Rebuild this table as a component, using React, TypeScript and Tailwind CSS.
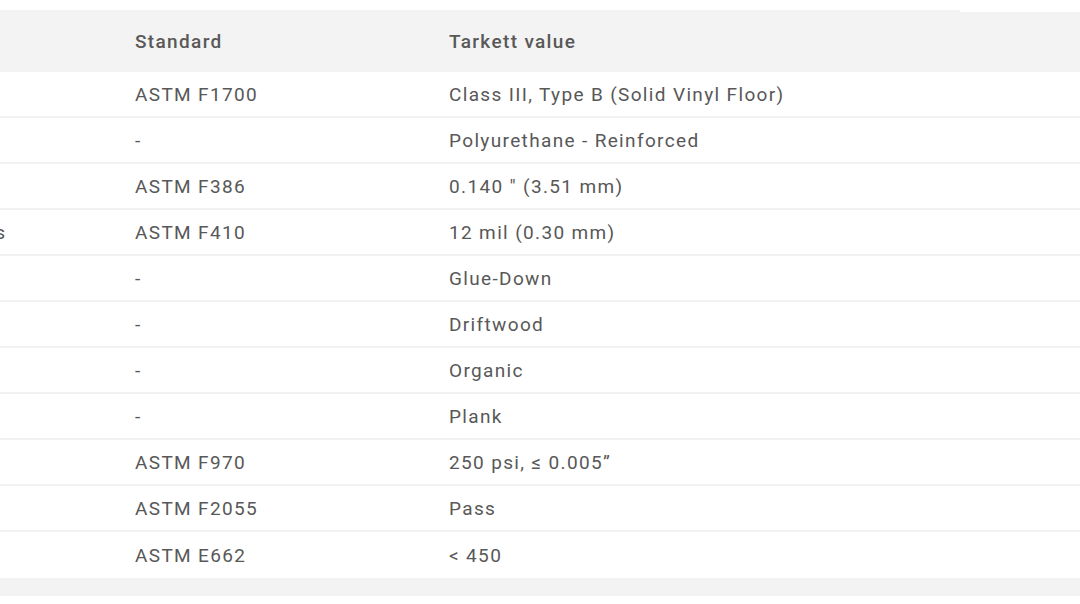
const rows: [string, string, string][] = [
  ["Classification", "ASTM F1700", "Class III, Type B (Solid Vinyl Floor)"],
  ["Finish", "-", "Polyurethane - Reinforced"],
  ["Overall Thickness", "ASTM F386", "0.140 \" (3.51 mm)"],
  ["Wear Layer Thickness", "ASTM F410", "12 mil (0.30 mm)"],
  ["Installation", "-", "Glue-Down"],
  ["Color", "-", "Driftwood"],
  ["Design", "-", "Organic"],
  ["Format", "-", "Plank"],
  ["Static Load Limit", "ASTM F970", "250 psi, ≤ 0.005”"],
  ["Squareness", "ASTM F2055", "Pass"],
  ["Smoke Density", "ASTM E662", "< 450"],
];

export default function App() {
  return (
    <main
      className="w-[1080px] h-[604px] overflow-hidden bg-white pt-[10px] text-[19px] tracking-[1.35px] text-[#585858]"
      style={{ fontFamily: "Roboto, 'Liberation Sans', sans-serif" }}
    >
      <div className="ml-[-205px]">
        <div className="relative grid grid-cols-[340px_314px_1fr] h-[62px] pt-[2px] items-center bg-[#f3f3f3] font-medium">
          <div>Test</div>
          <div>Standard</div>
          <div>Tarkett value</div>
          <div className="absolute top-0 right-0 w-[120px] h-[2px] bg-white" />
        </div>

        {rows.map(([label, standard, value], i) => (
          <div
            key={i}
            className={
              "grid grid-cols-[340px_314px_1fr] h-[46px] pt-[3px] items-center" +
              (i < rows.length - 1 ? " border-b-2 border-[#f2f2f2]" : "")
            }
          >
            <div className="whitespace-nowrap">{label}</div>
            <div>{standard}</div>
            <div>{value}</div>
          </div>
        ))}

        <div className="h-[18px] bg-[#f3f3f3]" />
      </div>
    </main>
  );
}
